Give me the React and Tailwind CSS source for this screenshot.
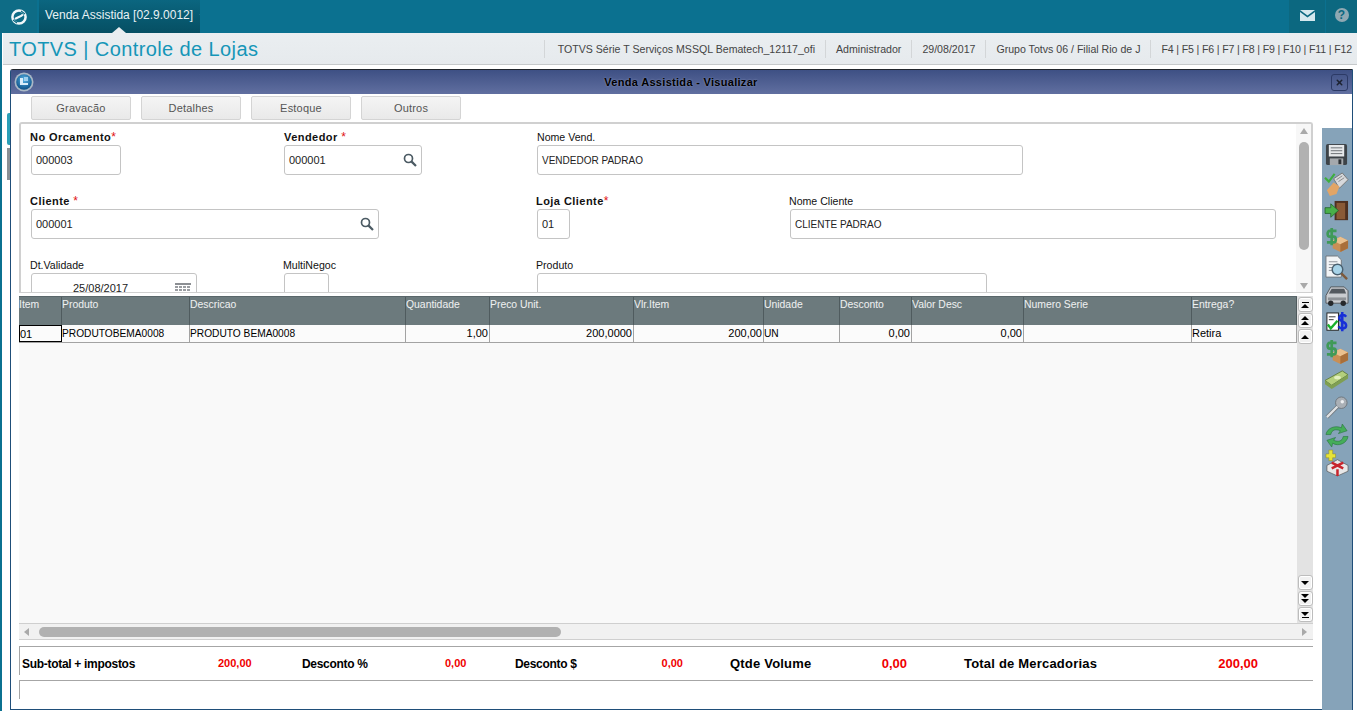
import { X } from 'lucide-react';

const columns = [
    { title: 'Item', width: 43, value: '01' },
    { title: 'Produto', width: 128, value: 'PRODUTOBEMA0008', caps: true },
    { title: 'Descricao', width: 216, value: 'PRODUTO BEMA0008', caps: true },
    { title: 'Quantidade', width: 84, value: '1,00', right: true },
    { title: 'Preco Unit.', width: 144, value: '200,0000', right: true },
    { title: 'Vlr.Item', width: 130, value: '200,00', right: true },
    { title: 'Unidade', width: 76, value: 'UN', caps: true },
    { title: 'Desconto', width: 72, value: '0,00', right: true },
    { title: 'Valor Desc', width: 112, value: '0,00', right: true },
    { title: 'Numero Serie', width: 168, value: '' },
    { title: 'Entrega?', width: 105, value: 'Retira' },
];

const LogoMark = () => (
    <svg width="18" height="18" viewBox="0 0 18 18" fill="none">
        <circle cx="9" cy="9" r="6.6" stroke="#f1f7f9" strokeWidth="2.5" />
        <path d="M5 11 C7 9.5 11 8.5 13 6.5" stroke="#f1f7f9" strokeWidth="2" />
        <path d="M11 3 L15 6 M3 12 L7 15" stroke="#0e6c86" strokeWidth="1.2" />
    </svg>
);

const MailIcon = () => (
    <svg width="15" height="11" viewBox="0 0 15 11">
        <path d="M0 0 H15 L7.5 5.5 Z" fill="#d5e8ee" />
        <path d="M0 2 L7.5 7.5 L15 2 V11 H0 Z" fill="#d5e8ee" />
    </svg>
);

const WindowLogo = () => (
    <svg width="20" height="20" viewBox="0 0 20 20">
        <defs>
            <radialGradient id="windowGlow" cx="50%" cy="35%" r="65%">
                <stop offset="0%" stopColor="#58b4e6" />
                <stop offset="100%" stopColor="#0b4f86" />
            </radialGradient>
        </defs>
        <circle cx="10" cy="10" r="9.5" fill="#a9b8c6" />
        <circle cx="10" cy="10" r="7.8" fill="url(#windowGlow)" />
        <path d="M6 6 H9 V11 H14 V13 H6 Z" fill="#d9eefa" />
        <rect x="10" y="5" width="4" height="4" fill="#9fd0ee" />
    </svg>
);

const SearchIcon = () => (
    <svg width="14" height="14" viewBox="0 0 14 14" fill="none">
        <circle cx="5.5" cy="5.5" r="4" stroke="#4b5a63" strokeWidth="1.7" />
        <path d="M8.6 8.6 L13 13" stroke="#4b5a63" strokeWidth="2.2" />
    </svg>
);

const CalendarIcon = () => (
    <svg width="16" height="10" viewBox="0 0 16 10">
        <rect width="16" height="2" fill="#8c8f93" />
        {[0, 1, 2, 3].map(c => [3, 6].map(r => (
            <rect key={`${c}-${r}`} x={c * 4} y={r} width="3" height="2" fill="#9a9da1" />
        )))}
    </svg>
);

const Box = ({ color = '#c98f55' }) => (
    <g>
        <path d="M8 13 L16 9 L24 13 L24 21 L16 25 L8 21 Z" fill={color} />
        <path d="M8 13 L16 9 L24 13 L16 17 Z" fill="#eac08e" />
        <path d="M16 17 L24 13 L24 21 L16 25 Z" fill="#a96f3a" />
    </g>
);

const Dollar = () => (
    <path d="M12 3 H5 C2 3 2 9 5 9 H9 C12 9 12 15 9 15 H2 M7 0 V18" stroke="#3f9a58" strokeWidth="2.8" fill="none" />
);

const toolIcons = [
    // disquete
    <g key="save">
        <rect x="1" y="0" width="22" height="22" rx="2" fill="#3d4348" />
        <rect x="4" y="1" width="16" height="12" fill="#e6e8ea" />
        <path d="M6 4 H18 M6 7 H18 M6 10 H18" stroke="#6b7074" />
        <rect x="5" y="15" width="14" height="7" fill="#a5a9ad" />
        <rect x="14" y="16" width="3" height="5" fill="#2e3236" />
    </g>,
    // confirmar
    <g key="ok">
        <path d="M9 7 L18 1 L24 8 L15 17 Z" fill="#d7d9dc" stroke="#777" />
        <path d="M12 8 L18 4 M14 10 L20 6" stroke="#888" />
        <path d="M2 19 L9 11 L15 15 L12 23 L5 25 Z" fill="#e2a566" />
        <path d="M0 6 L4 10 L10 2" stroke="#3dae3d" strokeWidth="2.2" fill="none" />
    </g>,
    // sair
    <g key="exit">
        <rect x="10" y="1" width="14" height="20" fill="#4e3020" />
        <rect x="12" y="3" width="9" height="17" fill="#8a5a36" />
        <path d="M0 8 H6 V4 L14 11 L6 18 V14 H0 Z" fill="#49b04a" stroke="#1f5f2a" strokeWidth="0.8" />
    </g>,
    // caixa com cifrao
    <g key="box1"><Box /><Dollar /></g>,
    // consulta
    <g key="find">
        <path d="M1 0 H13 L17 4 V22 H1 Z" fill="#f2f4f6" stroke="#70767c" />
        <path d="M4 6 H13 M4 9 H11 M4 12 H9 M4 15 H8" stroke="#8a9096" />
        <circle cx="13" cy="14" r="5.5" fill="#a7d3e8" stroke="#4a6070" strokeWidth="1.5" />
        <path d="M17 18 L23 24" stroke="#7d5a3c" strokeWidth="2.5" />
    </g>,
    // veiculo
    <g key="van">
        <path d="M1 12 L6 3 H20 L24 7 V20 H1 Z" fill="#c9ccd0" stroke="#55595d" />
        <path d="M7 5 H20 L22 10 H4 Z" fill="#53595f" />
        <rect x="3" y="14" width="19" height="3" fill="#8e9297" />
        <circle cx="6" cy="20" r="2.8" fill="#26292c" />
        <circle cx="19" cy="20" r="2.8" fill="#26292c" />
    </g>,
    // lista com cifrao
    <g key="list">
        <rect x="2" y="1" width="12" height="18" fill="#fff" stroke="#222" />
        <path d="M4 5 H11 M4 8 H9" stroke="#333" />
        <path d="M3 13 L6 17 L13 9" stroke="#18b02a" strokeWidth="2.4" fill="none" />
        <path d="M22 5 C20 2 14 3 15 7 C16 11 22 9 22 14 C22 18 16 18 14 15 M18 0 V20" stroke="#1730d8" strokeWidth="2.6" fill="none" />
    </g>,
    <g key="box2"><Box /><Dollar /></g>,
    // dinheiro
    <g key="money">
        <path d="M0 13 L18 3 L24 7 L7 18 Z" fill="#b4cf7c" stroke="#64803f" />
        <path d="M0 13 V17 L7 22 L24 11 V7 L7 18 Z" fill="#7f9f52" />
        <ellipse cx="13" cy="10" rx="3.5" ry="2" fill="#e3efbf" />
    </g>,
    // chave
    <g key="key">
        <circle cx="17" cy="7" r="6" fill="#aab0b6" stroke="#70767c" />
        <circle cx="18" cy="6" r="1.8" fill="#eef0f2" />
        <path d="M13 11 L2 22" stroke="#70767c" strokeWidth="4" />
        <path d="M13 11 L2 22" stroke="#dfe2e4" strokeWidth="2.4" />
    </g>,
    // atualizar
    <g key="refresh">
        <path d="M1 11 C2 4 11 1 17 4 L18 0 L23 7 L14 10 L16 7 C11 5 7 6 6 11 Z" fill="#45ad5a" stroke="#25713a" strokeWidth="0.6" />
        <path d="M24 13 C23 20 14 24 8 20 L7 24 L2 17 L11 14 L9 17 C14 19 18 18 19 13 Z" fill="#45ad5a" stroke="#25713a" strokeWidth="0.6" />
    </g>,
    // presente
    <g key="gift">
        <path d="M1 2 H4 V-2 H8 V2 H11 V6 H8 V9 H4 V6 H1 Z" fill="#e6e33a" stroke="#8a8a22" strokeWidth="0.5" />
        <path d="M2 14 L13 8 L24 14 L24 20 L13 25 L2 20 Z" fill="#e8e8e8" stroke="#555" strokeWidth="0.7" />
        <path d="M7 11 L19 17 M19 11 L7 17 M13 18 V25" stroke="#c8242c" strokeWidth="2.6" />
    </g>,
];

const Field = ({ label, required, bold, width, inputWidth, value, icon, inset, center, caps }) => (
    <div className="flex flex-col shrink-0" style={{ width }}>
        <span className={`h-[16px] leading-[17px] text-[#111] whitespace-nowrap ${bold ? 'font-bold text-[11px] tracking-[0.45px]' : 'text-[10.6px]'}`}>
            {label}{required && <span className="text-[#e01010] font-normal text-[12px]">{required}</span>}
        </span>
        <div
            className={`h-[30px] shrink-0 bg-white border border-[#c4c4c4] rounded-[3px] flex items-center justify-between text-[#222] ${inset ? 'ml-[1px]' : ''} ${center ? 'pl-[41px] pr-[5px]' : 'px-[4px]'} ${caps ? 'text-[10px]' : 'text-[11px]'}`}
            style={{ width: inputWidth }}
        >
            <span className="whitespace-nowrap">{value}</span>
            {icon}
        </div>
    </div>
);

const SmallScrollBtn = ({ kind }) => (
    <div className="w-[15px] h-[15px] mx-auto bg-[#f1f1f1] border border-[#bdbdbd] rounded-[3px] flex flex-col items-center justify-center gap-[1px] shadow-[inset_0_0_0_1px_#fff]">
        {kind === 'first' && <div className="w-[7px] h-[1px] bg-black" />}
        {(kind === 'first' || kind === 'pageUp' || kind === 'up') && <div className="w-0 h-0 border-x-[4px] border-x-transparent border-b-[4px] border-b-black" />}
        {kind === 'pageUp' && <div className="w-0 h-0 border-x-[4px] border-x-transparent border-b-[4px] border-b-black" />}
        {(kind === 'last' || kind === 'down' || kind === 'pageDown') && <div className="w-0 h-0 border-x-[4px] border-x-transparent border-t-[4px] border-t-black" />}
        {kind === 'pageDown' && <div className="w-0 h-0 border-x-[4px] border-x-transparent border-t-[4px] border-t-black" />}
        {kind === 'last' && <div className="w-[7px] h-[1px] bg-black" />}
    </div>
);

const Total = ({ label, value, labelW, valueW, big }) => (
    <div className="flex items-center shrink-0">
        <span className={`font-bold text-black shrink-0 whitespace-nowrap ${big ? 'text-[13px] tracking-[0.2px]' : 'text-[12px] tracking-[-0.3px]'}`} style={{ width: labelW }}>{label}</span>
        <span className={`font-bold text-[#f00000] text-right shrink-0 ${big ? 'text-[13px]' : 'text-[11px]'}`} style={{ width: valueW }}>{value}</span>
    </div>
);

const App = () => {
    return (
        <div className="w-[1357px] h-[711px] overflow-hidden bg-white flex flex-col font-['Liberation_Sans',Arial,sans-serif]">
            {/* barra superior */}
            <div className="h-[33px] shrink-0 bg-[#0b7190] flex">
                <div className="w-[37px] h-[33px] bg-[#0e6c86] flex items-center justify-center">
                    <LogoMark />
                </div>
                <div className="ml-[2px] w-[161px] relative bg-gradient-to-b from-[#0b6680] to-[#064f63] flex items-center pl-[6px] pb-[3px] text-[12px] text-[#e8f2f5] whitespace-nowrap">
                    <span>Venda Assistida [02.9.0012]</span>
                    <X size={9} strokeWidth={3} className="ml-[6px] mb-[2px] text-[#8fb4c0]" />
                    <div className="absolute bottom-0 left-[73px] w-0 h-0 border-x-[7px] border-x-transparent border-b-[6px] border-b-[#e9edf0]" />
                </div>
                <div className="flex-1" />
                <div className="w-[36px] bg-[#0c6880] flex items-center justify-center pb-[3px]">
                    <MailIcon />
                </div>
                <div className="ml-[1px] w-[31px] bg-[#0c6880] flex items-center justify-center pb-[3px]">
                    <div className="w-[14px] h-[14px] rounded-full bg-[#8fa9b3] text-[#0c6880] text-[12px] font-bold leading-[14px] text-center">?</div>
                </div>
            </div>

            <div className="flex-1 min-h-0 flex">
                <div className="w-[2px] shrink-0 bg-[#0b7190]" />

                <div className="flex-1 min-w-0 flex flex-col">
                    {/* barra do modulo */}
                    <div className="h-[32px] shrink-0 ml-[1px] bg-gradient-to-b from-[#eaeef1] to-[#e6eaed] border-b border-[#c6c9cb] flex items-center pl-[6px] pr-[5px]">
                        <span className="text-[20px] tracking-[0.4px] text-[#1596b8] leading-none whitespace-nowrap">TOTVS | Controle de Lojas</span>
                        <div className="ml-auto flex items-center text-[10.6px] text-[#444] whitespace-nowrap">
                            <span className="border-l border-[#d3d6d8] h-[18px] leading-[18px] pl-[13px] pr-[10px]">TOTVS Série T Serviços MSSQL Bematech_12117_ofi</span>
                            <span className="border-l border-[#d3d6d8] h-[18px] leading-[18px] px-[10px]">Administrador</span>
                            <span className="border-l border-[#d3d6d8] h-[18px] leading-[18px] px-[10px]">29/08/2017</span>
                            <span className="border-l border-[#d3d6d8] h-[18px] leading-[18px] px-[10px]">Grupo Totvs 06 / Filial Rio de J</span>
                            <span className="border-l border-[#d3d6d8] h-[18px] leading-[18px] pl-[10px] tracking-[-0.15px]">F4 | F5 | F6 | F7 | F8 | F9 | F10 | F11 | F12</span>
                        </div>
                    </div>

                    <div className="flex-1 min-h-0 flex pt-[4px] pb-[1px]">
                        {/* sobra da tela atras da janela */}
                        <div className="w-[8px] shrink-0 flex flex-col items-end pt-[44px]">
                            <div className="w-[3px] h-[32px] bg-[#2aa0b8] rounded-l-[2px]" />
                            <div className="w-[3px] h-[32px] mt-[3px] bg-[#8a9095]" />
                        </div>

                        {/* janela */}
                        <div className="w-[1343px] shrink-0 border border-[#1f4e79] border-t-[#20252b] rounded-tl-[3px] flex flex-col bg-white">
                            <div className="h-[24px] shrink-0 bg-gradient-to-b from-[#3e5084] to-[#616fa0] flex items-center relative">
                                <div className="absolute left-[3px] top-[2px]">
                                    <WindowLogo />
                                </div>
                                <span className="flex-1 text-center text-[11px] font-bold tracking-[0.3px] text-black pl-[20px] [text-shadow:0_0_2px_#8f9bc0]">Venda Assistida - Visualizar</span>
                                <div className="w-[17px] h-[17px] mr-[4px] mt-[1px] rounded-[3px] border border-[#2c3a66] flex items-center justify-center">
                                    <X size={9} strokeWidth={4} className="text-[#1c2230]" />
                                </div>
                            </div>

                            <div className="flex-1 min-h-0 flex">
                                <div className="w-[1302px] shrink-0 pl-[8px] flex flex-col">
                                    {/* botoes */}
                                    <div className="h-[28px] shrink-0 pl-[12px] pt-[2px] flex gap-[10px]">
                                        {['Gravacão', 'Detalhes', 'Estoque', 'Outros'].map(b => (
                                            <div key={b} className="w-[100px] h-[24px] bg-gradient-to-b from-[#f4f4f4] to-[#e9e9e9] border border-[#d4d4d4] rounded-[2px] flex items-center justify-center text-[11px] tracking-[0.2px] text-[#555]">{b}</div>
                                        ))}
                                    </div>

                                    {/* formulario */}
                                    <div className="h-[170px] shrink-0 border-2 border-b-0 border-[#d0d0d0] rounded-t-[3px] flex overflow-hidden">
                                        <div className="flex-1 min-w-0 pl-[9px] pt-[5px] flex flex-col gap-[18px]">
                                            <div className="flex">
                                                <Field label="No Orcamento" required="*" bold width={254} inputWidth={90} inset value="000003" />
                                                <Field label="Vendedor " required="*" bold width={253} inputWidth={138} value="000001" icon={<SearchIcon />} />
                                                <Field label="Nome Vend." width={487} inputWidth={486} value="VENDEDOR PADRAO" caps />
                                            </div>
                                            <div className="flex">
                                                <Field label="Cliente " required="*" bold width={506} inputWidth={348} inset value="000001" icon={<SearchIcon />} />
                                                <Field label="Loja Cliente" required="*" bold width={253} inputWidth={33} inset value="01" />
                                                <Field label="Nome Cliente" width={488} inputWidth={486} inset value="CLIENTE PADRAO" caps />
                                            </div>
                                            <div className="flex">
                                                <Field label="Dt.Validade" width={253} inputWidth={166} inset value="25/08/2017" icon={<CalendarIcon />} center />
                                                <Field label="MultiNegoc" width={253} inputWidth={45} inset value="" />
                                                <Field label="Produto" width={451} inputWidth={450} inset value="" />
                                            </div>
                                        </div>
                                        {/* rolagem do formulario */}
                                        <div className="w-[15px] shrink-0 bg-[#f7f7f7] flex flex-col items-center pt-[4px] pb-[3px]">
                                            <div className="w-0 h-0 border-x-[4px] border-x-transparent border-b-[6px] border-b-[#a9a9a9]" />
                                            <div className="w-[10px] h-[108px] mt-[8px] bg-[#b1b1b1] rounded-[5px]" />
                                            <div className="flex-1" />
                                            <div className="w-0 h-0 border-x-[4px] border-x-transparent border-t-[6px] border-t-[#a9a9a9]" />
                                        </div>
                                    </div>

                                    <div className="h-[4px] shrink-0 border-t border-[#d0d0d0]" />

                                    {/* grade */}
                                    <div className="h-[327px] shrink-0 flex">
                                        <div className="w-[1278px] shrink-0 bg-[#f9f9f9] flex flex-col overflow-hidden">
                                            <div className="h-[29px] shrink-0 flex bg-[#6c7a7d] border-t border-[#59666a]">
                                                {columns.map(c => (
                                                    <div key={c.title} className="shrink-0 h-full border-r border-[#4f5b5e] text-[10.4px] text-white/90 leading-[15px] whitespace-nowrap overflow-hidden" style={{ width: c.width }}>{c.title}</div>
                                                ))}
                                            </div>
                                            <div className="h-[18px] shrink-0 flex border-b border-[#a3a3a3] bg-[#fbfbfb]">
                                                {columns.map((c, i) => (
                                                    <div key={c.title} className={`shrink-0 h-full text-black leading-[17px] pr-[1px] whitespace-nowrap overflow-hidden ${c.caps ? 'text-[10.2px]' : 'text-[11px]'} ${c.right ? 'text-right' : ''} ${i === 0 ? 'border border-black' : 'border-r border-[#a3a3a3]'}`} style={{ width: c.width }}>{c.value}</div>
                                                ))}
                                            </div>
                                        </div>
                                        <div className="w-[16px] shrink-0 bg-[#e3e3e3] flex flex-col pt-[1px] pb-[1px]">
                                            <SmallScrollBtn kind="first" />
                                            <div className="h-[1px]" />
                                            <SmallScrollBtn kind="pageUp" />
                                            <div className="h-[1px]" />
                                            <SmallScrollBtn kind="up" />
                                            <div className="flex-1" />
                                            <SmallScrollBtn kind="down" />
                                            <div className="h-[1px]" />
                                            <SmallScrollBtn kind="pageDown" />
                                            <div className="h-[1px]" />
                                            <SmallScrollBtn kind="last" />
                                        </div>
                                    </div>

                                    {/* rolagem horizontal */}
                                    <div className="h-[17px] shrink-0 w-[1294px] bg-[#f1f1f1] border-y border-[#cfcfcf] flex items-center pl-[5px] pr-[6px]">
                                        <div className="w-0 h-0 border-y-[4px] border-y-transparent border-r-[5px] border-r-[#a9a9a9]" />
                                        <div className="ml-[10px] w-[522px] h-[10px] bg-[#b1b1b1] rounded-[5px]" />
                                        <div className="flex-1" />
                                        <div className="w-0 h-0 border-y-[4px] border-y-transparent border-l-[5px] border-l-[#a9a9a9]" />
                                    </div>

                                    {/* totais */}
                                    <div className="mt-[6px] h-[34px] shrink-0 w-[1294px] border-t border-[#a6a6a6] flex">
                                        <div className="w-[1px] h-[28px] shrink-0 bg-[#a6a6a6]" />
                                        <div className="flex-1 flex items-center pl-[2px]">
                                            <Total label="Sub-total + impostos" labelW={196} value="200,00" valueW={32} />
                                            <span className="w-[52px] shrink-0" />
                                            <Total label="Desconto %" labelW={143} value="0,00" valueW={21} />
                                            <span className="w-[49px] shrink-0" />
                                            <Total label="Desconto $" labelW={146} value="0,00" valueW={22} />
                                            <span className="w-[47px] shrink-0" />
                                            <Total big label="Qtde Volume" labelW={151} value="0,00" valueW={26} />
                                            <span className="w-[57px] shrink-0" />
                                            <Total big label="Total de Mercadorias" labelW={254} value="200,00" valueW={40} />
                                        </div>
                                    </div>
                                    <div className="h-[29px] shrink-0 w-[1294px] border-t border-[#a6a6a6]">
                                        <div className="w-[1px] h-[18px] bg-[#a6a6a6]" />
                                    </div>
                                </div>

                                {/* barra de ferramentas */}
                                <div className="ml-[9px] w-[30px] h-[582px] mt-[34px] bg-[#86a3b9] flex flex-col items-start pl-[3px] pt-[16px]">
                                    {toolIcons.map((icon, i) => (
                                        <svg key={i} width="24" height="24" viewBox="0 0 25 25" className="mb-[4px] shrink-0 overflow-visible">{icon}</svg>
                                    ))}
                                </div>
                            </div>
                        </div>
                    </div>
                </div>
            </div>
        </div>
    );
};

export default App;
